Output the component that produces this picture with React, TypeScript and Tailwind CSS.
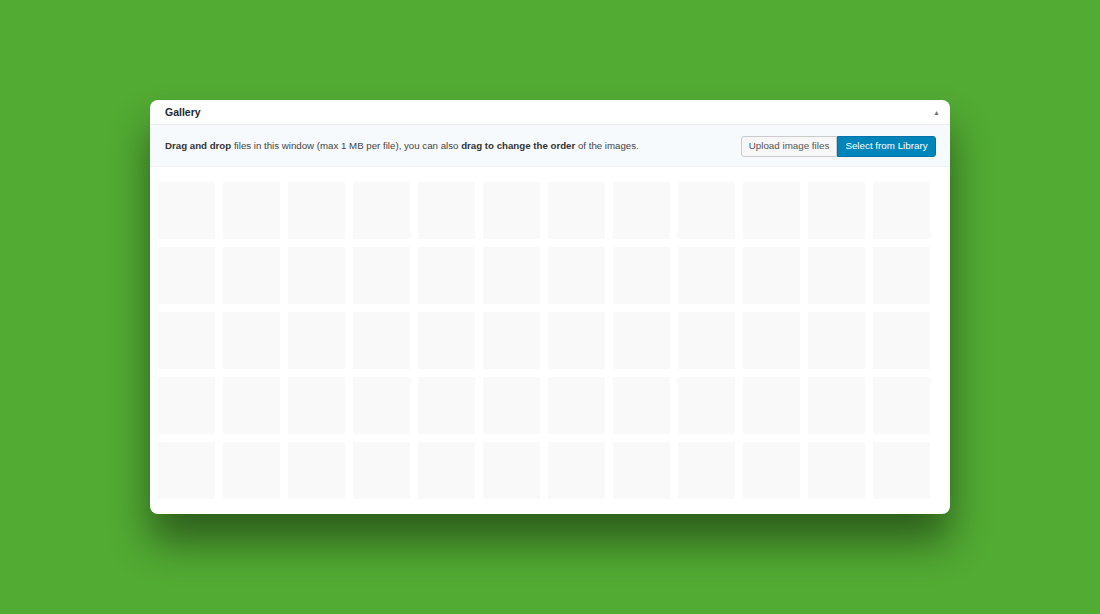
import React from 'react';

const tiles = Array.from({ length: 60 });

export default function App() {
  return (
    <div className="w-[1100px] h-[614px] bg-[#52ab33] pt-[100px] pl-[150px] font-['Liberation_Sans',Arial,sans-serif]">
      <div className="w-[800px] h-[414px] bg-white rounded-[8px] shadow-[0_28px_40px_rgba(0,0,0,0.45)] overflow-hidden">
        {/* header */}
        <div className="h-[25px] flex items-center justify-between pt-[2px] pl-[15px] pr-[10px] border-b border-[#eeeeee]">
          <span className="text-[10.5px] font-bold text-[#23282d]">Gallery</span>
          <span className="text-[7px] text-[#72777c]">▲</span>
        </div>

        {/* info bar */}
        <div className="h-[42px] flex items-center justify-between pt-[1px] pl-[15px] pr-[14px] bg-[#f6fafc] border-b border-[#eef2f4]">
          <p className="text-[9.7px] text-[#444444]">
            <strong className="text-[#333333]">Drag and drop</strong> files in this window (max 1 MB per file), you can also{' '}
            <strong className="text-[#333333]">drag to change the order</strong> of the images.
          </p>
          <div className="flex">
            <button className="h-[21px] w-[96px] text-[9.8px] text-[#555555] bg-[#f7f7f7] border border-[#cccccc] rounded-l-[3px]">
              Upload image files
            </button>
            <button className="h-[21px] w-[99px] text-[9.8px] text-white bg-[#0085ba] border border-[#0073aa] rounded-r-[3px]">
              Select from Library
            </button>
          </div>
        </div>

        {/* tiles */}
        <div className="pt-[15px] pl-[8px] grid grid-cols-[repeat(12,57px)] gap-[8px]">
          {tiles.map((_, i) => (
            <div key={i} className="w-[57px] h-[57px] bg-[#f9f9f9]" />
          ))}
        </div>
      </div>
    </div>
  );
}
